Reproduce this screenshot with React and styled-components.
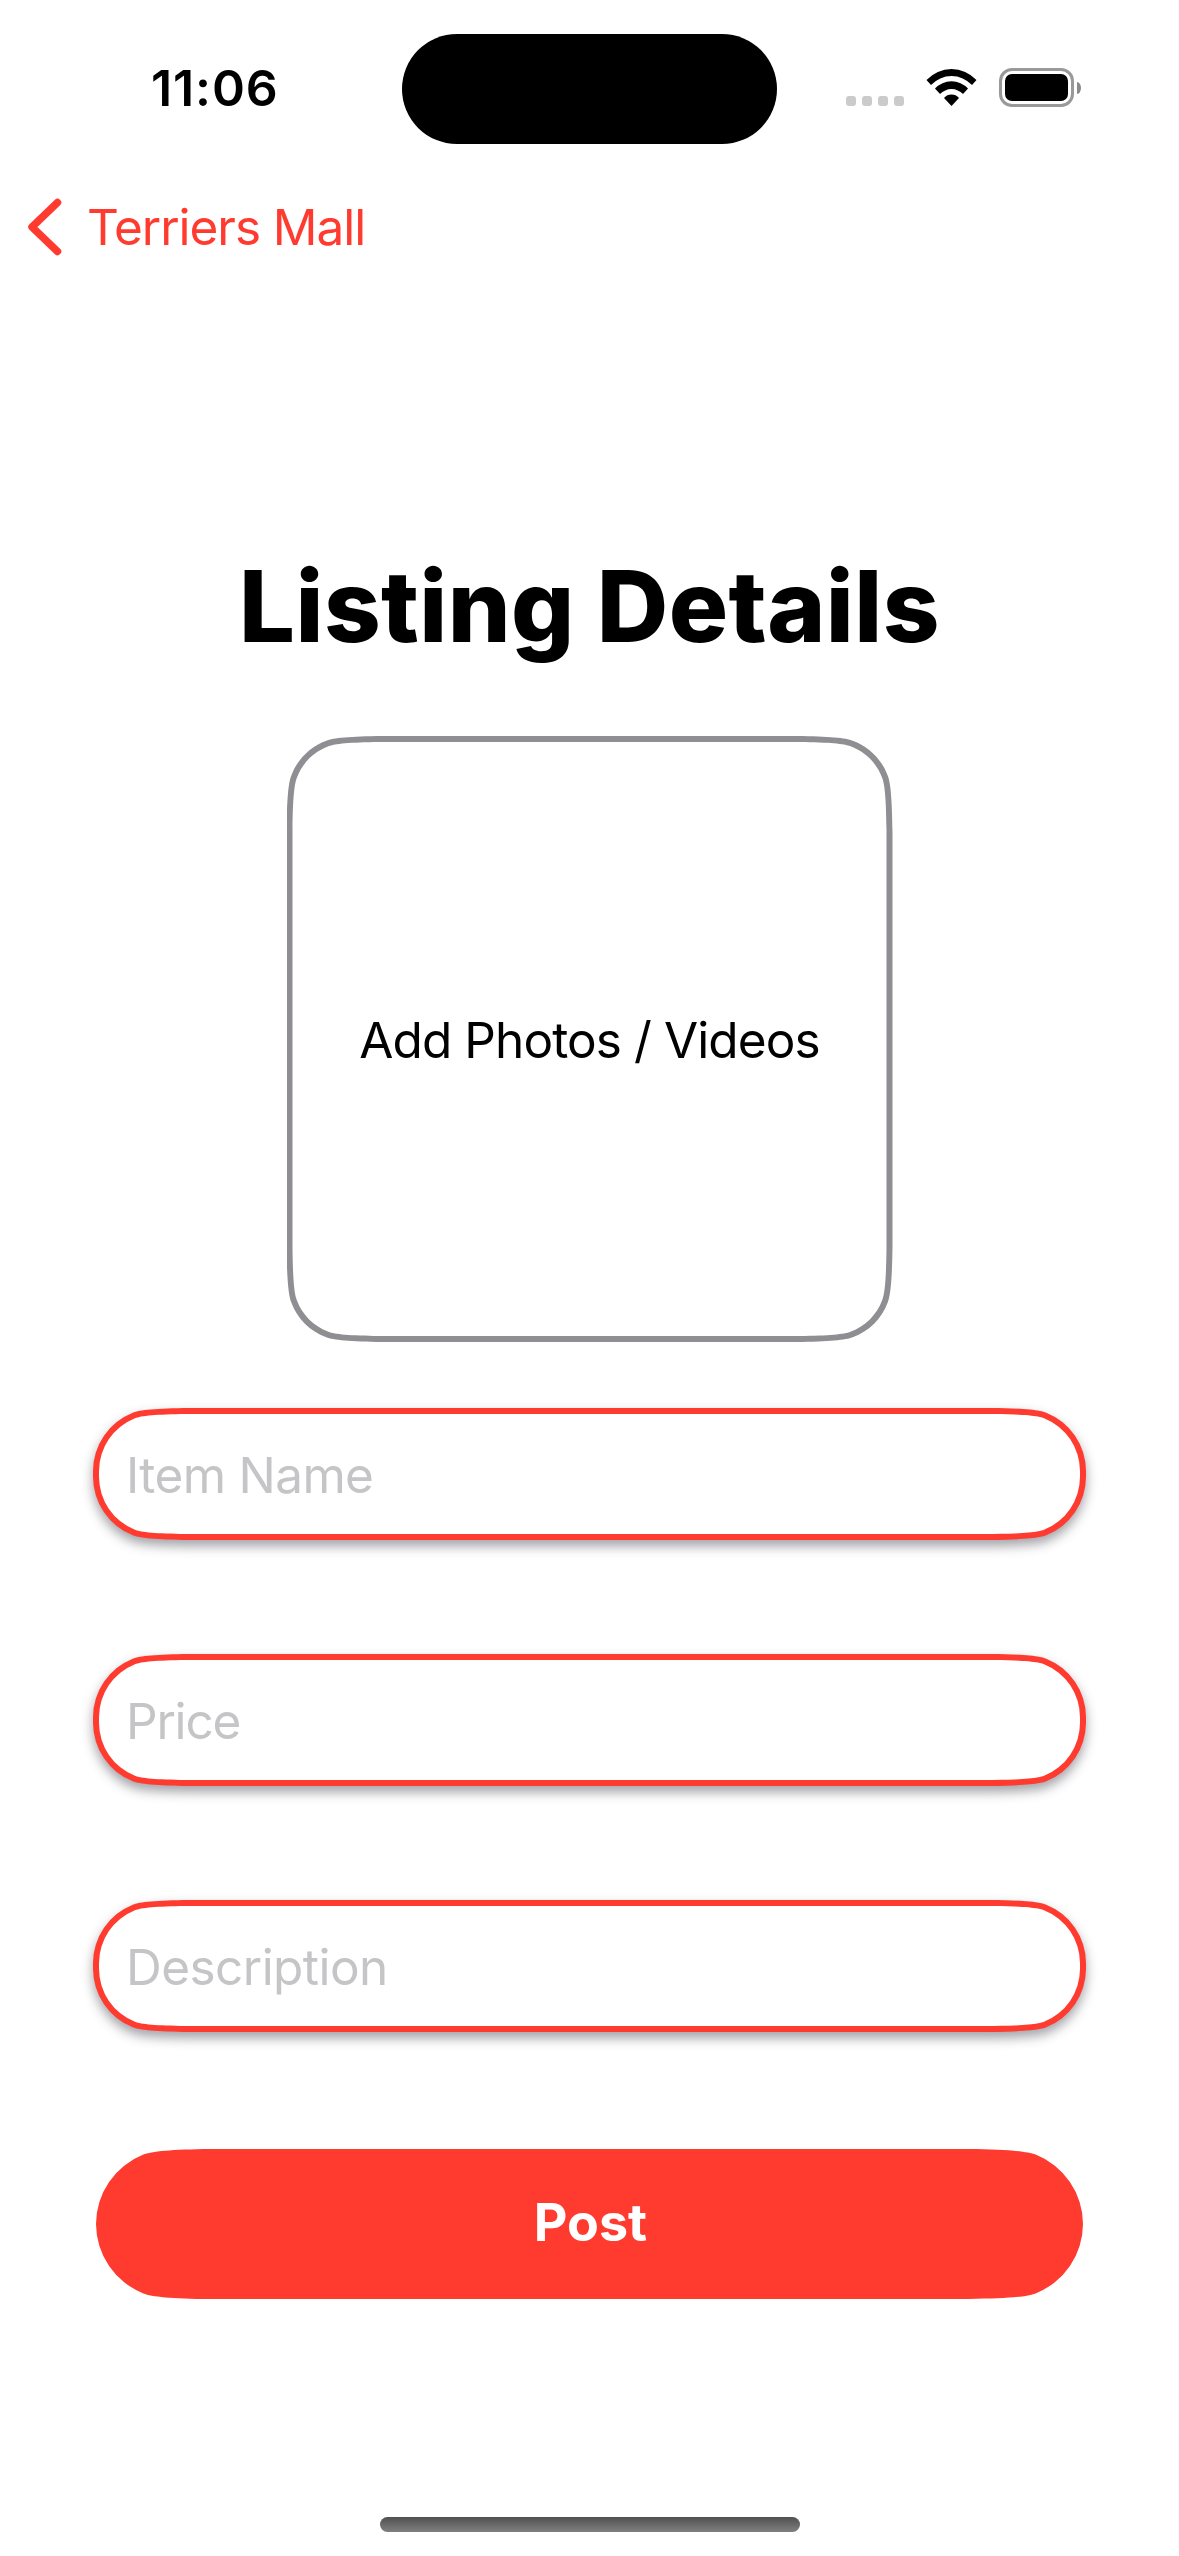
import React from "react";
import styled, { createGlobalStyle } from "styled-components";

const RED = "#ff3b30";

const GlobalStyle = createGlobalStyle`
  * { box-sizing: border-box; }
  body { margin: 0; background: #fff; }
`;

/* Continuous-curvature rectangle; r is the nominal corner radius. */
const smoothRect = (w, h, r, inset = 0) => {
  const left = inset;
  const top = inset;
  const right = w - inset;
  const bottom = h - inset;
  const a = 1.52866 * r;
  const capsule = a > (bottom - top) / 2;
  const px = (fx, n) => (fx ? right - n * r : left + n * r).toFixed(2);
  const py = (fy, n) => (fy ? bottom - n * r : top + n * r).toFixed(2);
  const p = (fx, fy, x, y) => `${px(fx, x)} ${py(fy, y)}`;
  const out = (fx, fy) =>
    `L${p(fx, fy, 1.52866, 0)} C${p(fx, fy, 1, 0.006)} ${p(fx, fy, 0.74, 0.031)} ${p(fx, fy, 0.63149, 0.07491)} ` +
    (capsule
      ? `A${r} ${r} 0 0 1 ${p(fx, fy, 0, 1)} `
      : `C${p(fx, fy, 0.37282, 0.16906)} ${p(fx, fy, 0.16906, 0.37282)} ${p(fx, fy, 0.07491, 0.63149)} C${p(fx, fy, 0.031, 0.74)} ${p(fx, fy, 0.006, 1)} ${p(fx, fy, 0, 1.52866)} `);
  const back = (fx, fy) =>
    (capsule
      ? `L${p(fx, fy, 0, 1)} A${r} ${r} 0 0 1 ${p(fx, fy, 0.63149, 0.07491)} `
      : `L${p(fx, fy, 0, 1.52866)} C${p(fx, fy, 0.006, 1)} ${p(fx, fy, 0.031, 0.74)} ${p(fx, fy, 0.07491, 0.63149)} C${p(fx, fy, 0.16906, 0.37282)} ${p(fx, fy, 0.37282, 0.16906)} ${p(fx, fy, 0.63149, 0.07491)} `) +
    `C${p(fx, fy, 0.74, 0.031)} ${p(fx, fy, 1, 0.006)} ${p(fx, fy, 1.52866, 0)} `;
  return `path("M${p(0, 0, 1.52866, 0)} ${out(1, 0)}${back(1, 1)}${out(0, 1)}${back(0, 0)}Z")`;
};

const Screen = styled.div`
  width: 1179px;
  height: 2556px;
  display: flex;
  flex-direction: column;
  background: #fff;
  color: #000;
  font-family: Inter, "Liberation Sans", sans-serif;
  font-size: 49.5px;
  overflow: hidden;
`;

const StatusBar = styled.header`
  height: 177px;
  padding: 33px 98px 0 151px;
  display: grid;
  grid-template-columns: 251px 375px 1fr;
  align-items: start;
`;

const Clock = styled.time`
  padding-top: 25px;
  line-height: 60px;
  font-weight: 600;
  font-size: 50px;
  letter-spacing: 0.9px;
`;

const Island = styled.div`
  height: 110px;
  margin-top: 1px;
  border-radius: 55px;
  background: #000;
`;

const StatusIcons = styled.div`
  display: flex;
  justify-content: flex-end;
  align-items: flex-end;
  height: 74px;
`;

const SignalDots = styled.div`
  display: flex;
  gap: 6px;
  margin: 0 22px 1px 0;
`;

const Dot = styled.i`
  width: 10px;
  height: 10px;
  border-radius: 3px;
  background: #cbcbcb;
`;

const WifiIcon = styled.svg`
  width: 51px;
  height: 37px;
  margin: 0 22px 1px 0;
`;

const Battery = styled.div`
  width: 75px;
  height: 39px;
  padding: 3px;
  border: 3px solid #999;
  border-radius: 13px;
`;

const BatteryLevel = styled.div`
  height: 100%;
  border-radius: 7px;
  background: #000;
`;

const BatteryTip = styled.i`
  width: 4px;
  height: 12px;
  margin: 0 0 13px 3px;
  border-radius: 0 4px 4px 0 / 0 6px 6px 0;
  background: #8a8a8a;
`;

const BackLink = styled.button`
  height: 100px;
  padding: 0 0 0 27px;
  border: 0;
  background: none;
  display: flex;
  align-items: center;
  gap: 25px;
  align-self: flex-start;
  color: ${RED};
  font: inherit;
  letter-spacing: -1.05px;
  white-space: nowrap;
`;

const Chevron = styled.svg`
  width: 35px;
  height: 58px;
`;

const Form = styled.main`
  flex: 1;
  display: flex;
  flex-direction: column;
  align-items: center;
  padding-top: 269px;
`;

const Title = styled.h1`
  margin: 0 0 70px;
  height: 120px;
  line-height: 120px;
  font-size: 99px;
  font-weight: 800;
  letter-spacing: 0.4px;
  white-space: nowrap;
`;

const Outline = styled.div`
  position: relative;
  isolation: isolate;
  width: ${(p) => p.$w}px;
  height: ${(p) => p.$h}px;
  display: flex;
  align-items: center;
  &::before,
  &::after {
    content: "";
    position: absolute;
    inset: 0;
    z-index: -1;
    background: ${(p) => p.$color};
    clip-path: ${(p) => smoothRect(p.$w, p.$h, p.$r + 3)};
  }
  &::after {
    background: #fff;
    clip-path: ${(p) => smoothRect(p.$w, p.$h, p.$r - 3, 6)};
  }
`;

const PhotoPicker = styled(Outline)`
  justify-content: center;
  padding-top: 2px;
  margin-bottom: 66px;
  letter-spacing: -0.9px;
  white-space: nowrap;
`;

const Fields = styled.div`
  display: flex;
  flex-direction: column;
  gap: 114px;
  margin-bottom: 117px;
`;

const Field = styled(Outline)`
  filter: drop-shadow(0 6px 6px rgba(20, 20, 35, 0.4));
`;

const Input = styled.input`
  width: 100%;
  height: 100%;
  padding: 2px 33px 0;
  border: 0;
  outline: 0;
  background: none;
  font: inherit;
  letter-spacing: ${(p) => p.$track}px;
  &::placeholder {
    color: #c5c5c7;
    opacity: 1;
  }
`;

const PostButton = styled.button`
  width: 987px;
  height: 150px;
  border: 0;
  padding: 0 0 3px 2px;
  background: ${RED};
  color: #fff;
  font: 700 52px Inter, "Liberation Sans", sans-serif;
  clip-path: ${smoothRect(987, 150, 75)};
`;

const HomeIndicator = styled.div`
  width: 420px;
  height: 15px;
  margin: 0 auto 24px;
  border-radius: 8px;
  background: linear-gradient(#505050, #808080);
`;

const FIELDS = [
  { name: "Item Name", track: -0.65 },
  { name: "Price", track: -1.2 },
  { name: "Description", track: -0.55 },
];

export default function App() {
  return (
    <Screen>
      <GlobalStyle />
      <StatusBar>
        <Clock>11:06</Clock>
        <Island />
        <StatusIcons>
          <SignalDots>
            {[0, 1, 2, 3].map((i) => (
              <Dot key={i} />
            ))}
          </SignalDots>
          <WifiIcon viewBox="0 0 51 37">
            <path d="M.5 11A34 34 0 0 1 50.5 11L46 16A28 28 0 0 0 5 16Z" />
            <path d="M9 19.5A22.5 22.5 0 0 1 42 19.5L37 25A16 16 0 0 0 14 25Z" />
            <path d="M18 29A10 10 0 0 1 33 29L25.5 37Z" />
          </WifiIcon>
          <Battery>
            <BatteryLevel />
          </Battery>
          <BatteryTip />
        </StatusIcons>
      </StatusBar>
      <BackLink>
        <Chevron viewBox="0 0 35 58" fill="none">
          <path
            d="M30.5 4.5L5 29L30.5 53.5"
            stroke={RED}
            strokeWidth="7.5"
            strokeLinecap="round"
            strokeLinejoin="round"
          />
        </Chevron>
        Terriers Mall
      </BackLink>
      <Form>
        <Title>Listing Details</Title>
        <PhotoPicker $w={606} $h={606} $r={60} $color="#8e8e93">
          Add Photos / Videos
        </PhotoPicker>
        <Fields>
          {FIELDS.map((f) => (
            <Field key={f.name} $w={993} $h={132} $r={60} $color={RED}>
              <Input placeholder={f.name} aria-label={f.name} $track={f.track} />
            </Field>
          ))}
        </Fields>
        <PostButton>Post</PostButton>
      </Form>
      <HomeIndicator />
    </Screen>
  );
}
